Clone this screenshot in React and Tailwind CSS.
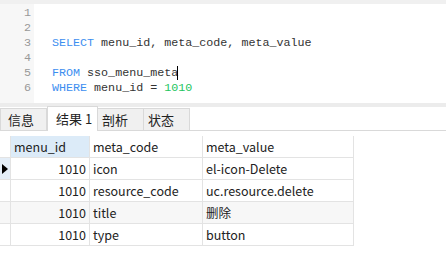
import React from "react";

const mono = { fontFamily: '"Liberation Mono", "DejaVu Sans Mono", monospace' };

function Line({ n, children }) {
  return (
    <div className="flex h-[15px] items-center">
      <div className="w-[34px] shrink-0 bg-[#f7f7f7] pr-[3px] text-right text-[#999999] h-full leading-[15px]">{n}</div>
      <div className="pl-[18px] leading-[15px] whitespace-pre text-[#333333]">{children}</div>
    </div>
  );
}

const K = ({ children }) => <span className="text-[#3d8ef0]">{children}</span>;

const rows = [
  ["1010", "icon", "el-icon-Delete"],
  ["1010", "resource_code", "uc.resource.delete"],
  ["1010", "title", "删除"],
  ["1010", "type", "button"],
];

export default function App() {
  return (
    <div className="w-[446px] h-[273px] bg-white overflow-hidden" style={{ fontFamily: '"Noto Sans CJK SC", "Noto Sans", sans-serif' }}>
      <div className="h-[4px] bg-[#f0f0f0]" />
      <div className="flex h-[99px] text-[11.7px]" style={mono}>
        <div className="flex flex-col w-full">
          <div className="h-[2px] w-[34px] bg-[#f7f7f7]" />
          <Line n="1"></Line>
          <Line n="2"></Line>
          <Line n="3"><K>SELECT</K> menu_id, meta_code, meta_value</Line>
          <Line n="4"></Line>
          <Line n="5"><K>FROM</K> sso_menu_meta<span className="inline-block w-[1px] h-[14px] bg-black align-middle -ml-[1px]" /></Line>
          <Line n="6"><K>WHERE</K> menu_id = <span className="text-[#22c55e]">1010</span></Line>
          <div className="flex-1 w-[34px] bg-[#f7f7f7]" />
        </div>
      </div>
      <div className="h-[4px] bg-[#ececec]" />
      <div className="flex h-[24px] items-end border-b border-[#d9d9d9] text-[13px] text-[#222]">
        <div className="h-[22px] w-[47px] border border-b-0 border-[#d9d9d9] bg-[#f0f0f0] pl-[7px] leading-[21px]">信息</div>
        <div className="w-[51px] border border-b-0 border-[#d9d9d9] bg-white pl-[8px] leading-[23px] -mb-[1px] h-[25px] whitespace-pre">结果 1</div>
        <div className="h-[22px] w-[46px] border border-l-0 border-b-0 border-[#d9d9d9] bg-[#f0f0f0] pl-[4px] leading-[21px]">剖析</div>
        <div className="h-[22px] w-[46px] border border-l-0 border-b-0 border-[#d9d9d9] bg-[#f0f0f0] pl-[4px] leading-[21px]">状态</div>
      </div>
      <div className="h-[5px]" />
      <div className="flex flex-col text-[12.5px] text-[#222] w-[354px]">
        <div className="flex h-[22px] border-b border-[#e3e3e3]">
          <div className="w-[11px] border-r border-[#e3e3e3]" />
          <div className="w-[79px] border-r border-[#e3e3e3] bg-[#dcebf8] pl-[3px] leading-[22px]">menu_id</div>
          <div className="w-[113px] border-r border-[#e3e3e3] pl-[3px] leading-[22px]">meta_code</div>
          <div className="w-[151px] border-r border-[#e3e3e3] pl-[3px] leading-[22px]">meta_value</div>
        </div>
        {rows.map((r, i) => (
          <div key={i} className={`flex h-[22px] border-b border-[#e3e3e3] ${i === 2 ? "bg-[#f7f7f7]" : "bg-white"}`}>
            <div className={`w-[11px] border-r border-[#e3e3e3] flex items-center ${i === 0 ? "bg-[#e4eef8]" : ""}`}>
              {i === 0 && (
                <svg width="6" height="10" viewBox="0 0 6 10" className="ml-[2px]"><path d="M0 0 L6 5 L0 10 Z" fill="#000" /></svg>
              )}
            </div>
            <div className="w-[79px] border-r border-[#e3e3e3] pr-[3px] text-right leading-[22px]">{r[0]}</div>
            <div className="w-[113px] border-r border-[#e3e3e3] pl-[3px] leading-[22px]">{r[1]}</div>
            <div className="w-[151px] border-r border-[#e3e3e3] pl-[3px] leading-[22px]">{r[2]}</div>
          </div>
        ))}
      </div>
    </div>
  );
}
